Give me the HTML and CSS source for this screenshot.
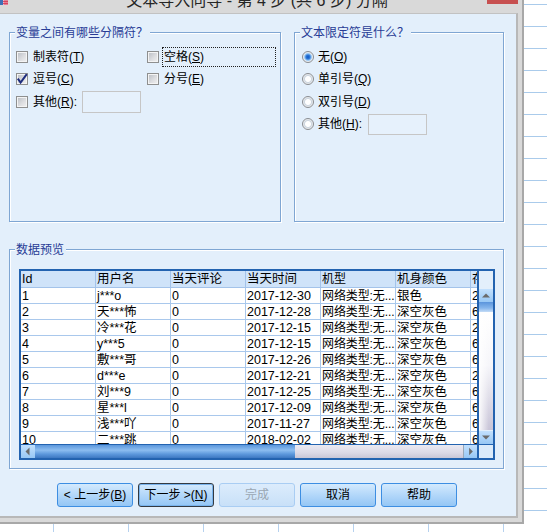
FILE: index.html
```html
<!DOCTYPE html>
<html lang="zh-CN">
<head>
<meta charset="utf-8">
<title>文本导入向导</title>
<link rel="stylesheet" href="styles.css">
</head>
<body>
<div class="win">
  <div class="titlebar">
    <svg class="appicon" width="8" height="5" viewBox="0 0 8 5">
      <rect x="0" y="0" width="3" height="5" fill="#3d6fb6"/>
      <rect x="3" y="0" width="5" height="5" fill="#f3b3c3"/>
      <path d="M3 1.5H8M3 3.5H8M5 0V5M7 0V5" stroke="#d2334f" stroke-width="0.8"/>
    </svg>
    <div class="title">文本导入向导 - 第 4 步 (共 6 步) 分隔</div>
    <div class="close"></div>
  </div>
  <div class="client">
    <div class="toprow">
      <div class="group g1">
        <div class="legend">变量之间有哪些分隔符？</div>
        <div class="opts two">
          <div class="opt"><span class="chk"></span><span class="lbl">制表符(<u>T</u>)</span></div>
          <div class="opt"><span class="chk"></span><span class="lbl focus">空格(<u>S</u>)</span></div>
          <div class="opt"><span class="chk on"><svg width="12" height="12" viewBox="0 0 12 12"><path d="M1.8 5.6 L4.6 9.6 L10.8 1.2" fill="none" stroke="#1e2d7e" stroke-width="2"/></svg></span><span class="lbl">逗号(<u>C</u>)</span></div>
          <div class="opt"><span class="chk"></span><span class="lbl">分号(<u>E</u>)</span></div>
          <div class="opt"><span class="chk"></span><span class="lbl">其他(<u>R</u>):</span><span class="field f1"></span></div>
        </div>
      </div>
      <div class="group g2">
        <div class="legend">文本限定符是什么？</div>
        <div class="opts one">
          <div class="opt"><span class="radio on"></span><span class="lbl r">无(<u>O</u>)</span></div>
          <div class="opt"><span class="radio"></span><span class="lbl r">单引号(<u>Q</u>)</span></div>
          <div class="opt"><span class="radio"></span><span class="lbl r">双引号(<u>D</u>)</span></div>
          <div class="opt"><span class="radio"></span><span class="lbl r">其他(<u>H</u>):</span><span class="field f2"></span></div>
        </div>
      </div>
    </div>
    <div class="group g3">
      <div class="legend">数据预览</div>
      <div class="tablebox">
        <div class="viewport">
          <div class="tr th">
            <span>Id</span><span>用户名</span><span>当天评论</span><span>当天时间</span><span>机型</span><span>机身颜色</span><span>存储容量</span>
          </div>
          <div class="tr"><span>1</span><span>j***o</span><span>0</span><span>2017-12-30</span><span>网络类型:无...</span><span>银色</span><span>256GB</span></div>
          <div class="tr"><span>2</span><span>天***怖</span><span>0</span><span>2017-12-28</span><span>网络类型:无...</span><span>深空灰色</span><span>64GB</span></div>
          <div class="tr"><span>3</span><span>冷***花</span><span>0</span><span>2017-12-15</span><span>网络类型:无...</span><span>深空灰色</span><span>256GB</span></div>
          <div class="tr"><span>4</span><span>y***5</span><span>0</span><span>2017-12-15</span><span>网络类型:无...</span><span>深空灰色</span><span>64GB</span></div>
          <div class="tr"><span>5</span><span>敷***哥</span><span>0</span><span>2017-12-26</span><span>网络类型:无...</span><span>深空灰色</span><span>64GB</span></div>
          <div class="tr"><span>6</span><span>d***e</span><span>0</span><span>2017-12-21</span><span>网络类型:无...</span><span>深空灰色</span><span>256GB</span></div>
          <div class="tr"><span>7</span><span>刘***9</span><span>0</span><span>2017-12-25</span><span>网络类型:无...</span><span>深空灰色</span><span>64GB</span></div>
          <div class="tr"><span>8</span><span>星***l</span><span>0</span><span>2017-12-09</span><span>网络类型:无...</span><span>深空灰色</span><span>64GB</span></div>
          <div class="tr"><span>9</span><span>浅***吖</span><span>0</span><span>2017-11-27</span><span>网络类型:无...</span><span>深空灰色</span><span>64GB</span></div>
          <div class="tr"><span>10</span><span>二***跳</span><span>0</span><span>2018-02-02</span><span>网络类型:无...</span><span>深空灰色</span><span>64GB</span></div>
        </div>
        <div class="vbar">
          <div class="vcorner"></div>
          <div class="sbtn"><svg width="14" height="13" viewBox="0 0 14 13"><path d="M3 8.5 L7 4.5 L11 8.5 Z" fill="#6b6b6b"/></svg></div>
          <div class="vthumb"></div>
          <div class="vtrack"></div>
          <div class="sbtn"><svg width="14" height="13" viewBox="0 0 14 13"><path d="M3 4.5 L7 8.5 L11 4.5 Z" fill="#6b6b6b"/></svg></div>
        </div>
        <div class="hbar">
          <div class="sbtn h"><svg width="14" height="13" viewBox="0 0 14 13"><path d="M8.5 2.5 L4.5 6.5 L8.5 10.5 Z" fill="#6b6b6b"/></svg></div>
          <div class="hthumb"></div>
          <div class="htrack"></div>
          <div class="sbtn h r"><svg width="14" height="13" viewBox="0 0 14 13"><path d="M5.5 2.5 L9.5 6.5 L5.5 10.5 Z" fill="#6b6b6b"/></svg></div>
        </div>
        <div class="corner"></div>
      </div>
    </div>
    <div class="buttons">
      <div class="btn">&lt; 上一步(<u>B</u>)</div>
      <div class="btn default">下一步 &gt;(<u>N</u>)</div>
      <div class="btn disabled">完成</div>
      <div class="btn">取消</div>
      <div class="btn">帮助</div>
    </div>
  </div>
</div>
</body>
</html>
```
FILE: styles.css
```css
* { box-sizing: border-box; }
html, body { margin: 0; padding: 0; }
body {
  width: 547px;
  height: 532px;
  overflow: hidden;
  background-color: #ffffff;
  background-image:
    repeating-linear-gradient(to bottom, transparent 0, transparent 4px, #aacbeb 4px, #aacbeb 5px, transparent 5px, transparent 22px),
    repeating-linear-gradient(to right, transparent 0, transparent 53px, #b6d1ee 53px, #b6d1ee 54px, transparent 54px, transparent 75px);
  font-family: "Liberation Sans", "Noto Sans CJK SC", sans-serif;
  font-size: 12px;
  color: #000;
}
u { text-decoration: underline; text-underline-offset: 1px; }

.win {
  width: 524px;
  height: 524px;
  background: #d9d9d9;
  border-right: 2px solid #a8a8a8;
  border-bottom: 2px solid #a8a8a8;
  padding: 0 4px 4px 0;
  display: flex;
  flex-direction: column;
}
.titlebar {
  height: 13px;
  display: flex;
  align-items: flex-start;
  overflow: hidden;
  flex: none;
}
.appicon { flex: none; }
.title {
  flex: 1;
  text-align: center;
  font-size: 16px;
  line-height: 16px;
  margin-top: -7px;
  padding-left: 19px;
  color: #262626;
  white-space: nowrap;
}
.close {
  width: 31px;
  height: 4px;
  background: #c75050;
  flex: none;
}
.client {
  flex: 1;
  background: #e3effb;
  border-top: 1px solid #c2c2c2;
  border-right: 2px solid #b8b8b8;
  border-bottom: 2px solid #b8b8b8;
  padding: 18px 0 0 9px;
}
.toprow { display: flex; gap: 13px; }
.group {
  border: 1px solid #7fa6d3;
  box-shadow: inset 1px 1px 0 #ffffff, 1px 1px 0 #ffffff;
}
.g1 { width: 272px; height: 190px; }
.g2 { width: 210px; height: 190px; }
.g3 { width: 495px; height: 220px; margin-top: 27px; }
.legend {
  width: fit-content;
  height: 14px;
  line-height: 14px;
  margin: -7px 0 0 5px;
  padding: 0 2px 0 1px;
  background: #e3effb;
  color: #283c96;
}
.opts { display: grid; grid-auto-rows: 22.5px; margin-top: 5.5px; }
.opts.two { grid-template-columns: 131px auto; padding-left: 6px; }
.opts.one { grid-template-columns: auto; padding-left: 7px; }
.opt { display: flex; align-items: center; }
.chk {
  width: 12px;
  height: 12px;
  flex: none;
  border: 1px solid #8e8f8f;
  background: linear-gradient(135deg, #b8bcc2 0%, #dcdde0 55%, #f2f2f2 100%);
  box-shadow: inset 0 0 0 1px #f4f4f4;
  position: relative;
}
.chk svg { position: absolute; left: -1px; top: -1px; }
.radio {
  width: 12px;
  height: 12px;
  flex: none;
  border-radius: 50%;
  border: 1px solid #8a8d92;
  background: radial-gradient(circle, #ffffff 0, #ffffff 2.5px, #cdd6e0 3.5px, #e4e8ec 4.5px, #f6f6f6 5px);
}
.radio.on {
  background: radial-gradient(circle, #0f56c2 0, #2d78d8 2px, #8ec2f2 3.3px, #dde8f4 4.3px, #f4f4f4 5px);
}
.lbl {
  border: 1px solid transparent;
  padding: 0 1px;
  margin-left: 3px;
  line-height: 16px;
  white-space: nowrap;
}
.lbl.r { margin-left: 2px; }
.lbl.focus {
  border: 1px dotted #202020;
  width: 114px;
  height: 20px;
  display: flex;
  align-items: center;
}
.field {
  width: 59px;
  flex: none;
  border: 1px solid #c6c6c6;
  background: #e6f1fc;
}
.f1 { height: 22px; margin-left: 3px; }
.f2 { height: 21px; margin-left: 4px; }

.tablebox {
  width: 476px;
  height: 191px;
  margin: 12px 0 0 9px;
  border: 2px solid #2363b0;
  display: grid;
  grid-template-columns: 456px 16px;
  grid-template-rows: 173px 14px;
  background: #fff;
}
.viewport { overflow: hidden; background: #fff; }
.tr {
  display: grid;
  grid-template-columns: repeat(7, 75px);
  width: 525px;
  font-size: 12.5px;
}
.tr span {
  border-right: 1px solid #a9c8ec;
  border-bottom: 1px solid #a9c8ec;
  padding-left: 1px;
  line-height: 17px;
  height: 16px;
  white-space: nowrap;
  overflow: hidden;
}
.tr span:nth-child(5) { font-size: 12px; letter-spacing: -0.1px; }
.tr.th span {
  background: #cfe3f9;
  line-height: 17px;
  height: 17px;
  border-color: #a3c3ea;
}
.vbar {
  border-left: 2px solid #2363b0;
  background: #e3effb;
  display: flex;
  flex-direction: column;
}
.vcorner { height: 18px; flex: none; }
.sbtn {
  height: 13px;
  flex: none;
  background: linear-gradient(to bottom, #c2e0fd, #98c8f5);
  display: flex;
}
.sbtn.h { width: 14px; height: 13px; }
.sbtn.r { border-left: 1px solid #9aa8b8; }
.vthumb {
  height: 10px;
  flex: none;
  background: linear-gradient(to bottom, #5a94dc, #86b6ec 60%, #c4dcf6);
}
.vtrack {
  flex: 1;
  margin-bottom: 1px;
  background:
    linear-gradient(to right, rgba(255,255,255,0.9), rgba(255,255,255,0) 70%),
    linear-gradient(to bottom, #ffffff 0%, #f6f6fa 45%, #c9c5d8 100%);
}
.hbar {
  border-top: 1px solid #2363b0;
  display: flex;
  background: #e3effb;
}
.hthumb {
  width: 260px;
  flex: none;
  background: linear-gradient(to bottom, #5b97dc 0%, #8cbdf0 40%, #5d98dc 70%, #3d78c2 100%);
}
.htrack {
  flex: 1;
  background: linear-gradient(to bottom, #ebeaf2 0%, #dcd9e6 60%, #c9c6d6 100%);
}
.corner {
  border-left: 2px solid #2363b0;
  border-top: 1px solid #2363b0;
  background: #dcebfa;
}

.buttons {
  display: flex;
  gap: 5px;
  margin: 14px 0 0 48px;
}
.btn {
  width: 76px;
  height: 24px;
  border: 1px solid #3d8ee2;
  border-radius: 3px;
  background: linear-gradient(to bottom, #d4eafd 0%, #b6d9fa 45%, #94c6f5 100%);
  text-align: center;
  line-height: 22px;
  white-space: nowrap;
}
.btn.default {
  border: 1px solid #333a42;
  box-shadow: inset 0 0 0 1px #79b3ec;
}
.btn.disabled {
  border-color: #a9cdf3;
  background: linear-gradient(to bottom, #dcecfc, #c8e0f8);
  color: #9aa6b2;
}
```
